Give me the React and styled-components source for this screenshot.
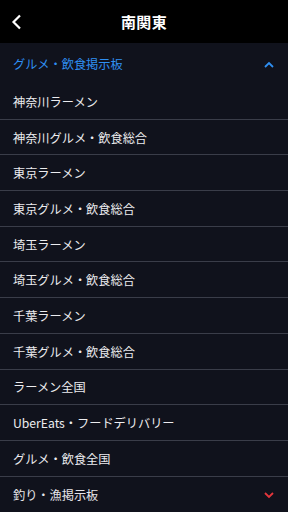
import React from "react";
import styled, { createGlobalStyle } from "styled-components";

const GlobalStyle = createGlobalStyle`
  html, body {
    margin: 0;
    padding: 0;
    background: #10121c;
  }
  body {
    font-family: "Noto Sans CJK JP", "Noto Sans", sans-serif;
  }
`;

const Screen = styled.div`
  width: 288px;
  height: 512px;
  overflow: hidden;
  background: #10121c;
  display: flex;
  flex-direction: column;
`;

const Header = styled.div`
  height: 43px;
  flex-shrink: 0;
  background: #000;
  display: grid;
  grid-template-columns: 40px 1fr 40px;
  align-items: center;
`;

const BackButton = styled.div`
  display: flex;
  align-items: center;
  padding-left: 11px;
`;

const Title = styled.div`
  text-align: center;
  color: #fff;
  font-size: 15px;
  font-weight: 700;
  letter-spacing: 0.3px;
`;

const SectionHead = styled.div`
  box-sizing: border-box;
  height: ${({ tall }) => (tall ? 41 : 36)}px;
  flex-shrink: 0;
  display: flex;
  align-items: center;
  justify-content: space-between;
  padding: 1px 14px 0 13px;
  color: ${({ open }) => (open ? "#2f8ff2" : "#e6e6ea")};
  font-size: 12.2px;
`;

const Row = styled.div`
  box-sizing: border-box;
  height: 35.7px;
  flex-shrink: 0;
  display: flex;
  align-items: center;
  padding: 1px 0 0 13px;
  color: #ececef;
  font-size: 12.2px;
  border-bottom: 1px solid #3a3d49;
`;

const Chevron = ({ up, color }) => (
  <svg width="10" height="7" viewBox="0 0 10 7">
    <path
      d={up ? "M1 6 L5 2 L9 6" : "M1 1 L5 5 L9 1"}
      fill="none"
      stroke={color}
      strokeWidth="1.8"
    />
  </svg>
);

const items = [
  "神奈川ラーメン",
  "神奈川グルメ・飲食総合",
  "東京ラーメン",
  "東京グルメ・飲食総合",
  "埼玉ラーメン",
  "埼玉グルメ・飲食総合",
  "千葉ラーメン",
  "千葉グルメ・飲食総合",
  "ラーメン全国",
  "UberEats・フードデリバリー",
  "グルメ・飲食全国",
];

export default function App() {
  return (
    <Screen>
      <GlobalStyle />
      <Header>
        <BackButton>
          <svg width="12" height="16" viewBox="0 0 12 16">
            <path
              d="M9 1.5 L2.5 8 L9 14.5"
              fill="none"
              stroke="#fff"
              strokeWidth="2.2"
            />
          </svg>
        </BackButton>
        <Title>南関東</Title>
        <span />
      </Header>
      <SectionHead open tall>
        <span>グルメ・飲食掲示板</span>
        <Chevron up color="#2f8ff2" />
      </SectionHead>
      {items.map((t) => (
        <Row key={t}>{t}</Row>
      ))}
      <SectionHead>
        <span>釣り・漁掲示板</span>
        <Chevron color="#e5363c" />
      </SectionHead>
    </Screen>
  );
}
